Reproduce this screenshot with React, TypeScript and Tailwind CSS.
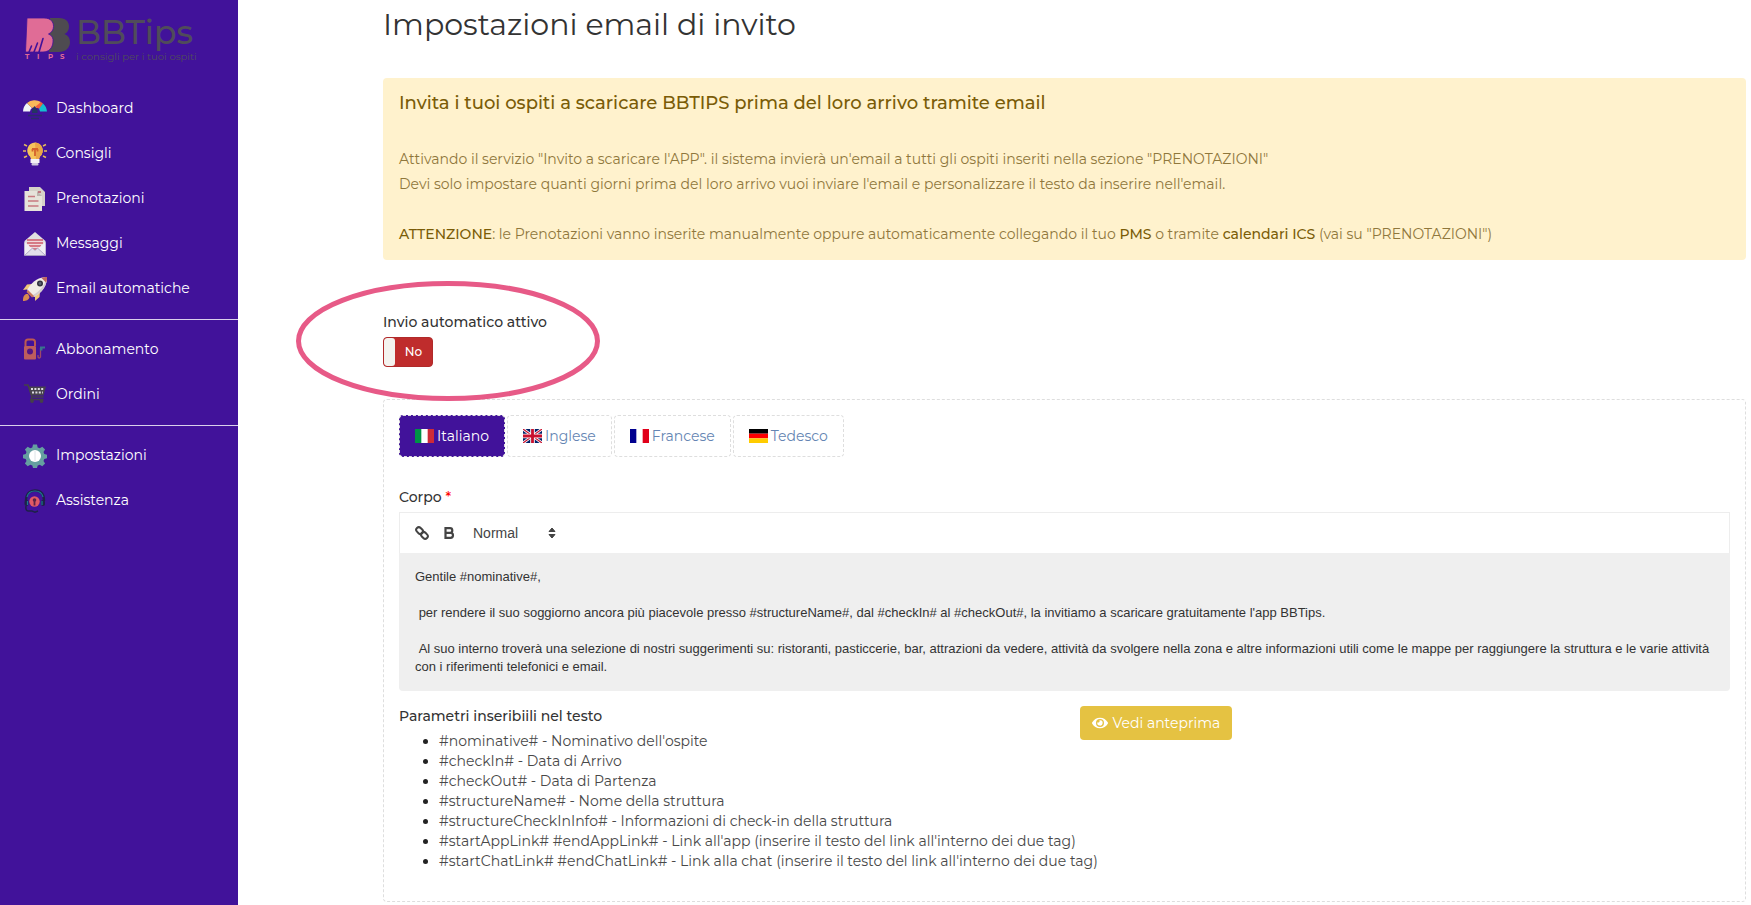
import { useState } from "react";
import type { ReactNode } from "react";
import { FaEye } from "react-icons/fa";

function Logo() {
  return (
    <a href="#" aria-label="BBTips" className="flex h-11 gap-1.5 pl-6">
      <svg viewBox="0 0 46 44" className="h-11 w-[46px] shrink-0" aria-hidden="true">
        <path
          d="M26 1 H35 C42 1 45 5 45 9.500 C45 13 43.500 15.500 40.500 17 C44 18.500 46 21 46 25 C46 31 41.500 35 35 35 H25z"
          fill="#4e4b50"
        />
        <path
          d="M3 1 H20 C27 1 29.500 5 29.500 9.500 C29.500 13 27.500 15.500 24.500 17 C28 18.500 29.500 21 29 25 C28.500 31 25 35 19 35 H1.500z"
          fill="#e06c96"
          stroke="#41129a"
          strokeWidth=".8"
        />
        <path
          d="M5 35 L7.500 29 M10 35 L13.500 26 M15 35 L19 21.500"
          fill="none"
          stroke="#41129a"
          strokeWidth="1.600"
          strokeLinecap="round"
        />
        <g fill="#e06c96" fontFamily="Montserrat, Inter, sans-serif" fontSize="7" fontWeight="700">
          <text x="1" y="42">T</text>
          <text x="13" y="42">I</text>
          <text x="24" y="42">P</text>
          <text x="36" y="42">S</text>
        </g>
      </svg>
      <span className="flex flex-col text-[#504c5a]">
        <span className="text-[33px] leading-[30px] font-medium">BBTips</span>
        <span className="pt-1 text-[10px] leading-3 whitespace-nowrap">i consigli per i tuoi ospiti</span>
      </span>
    </a>
  );
}

function Icon({ children }: { children: ReactNode }) {
  return (
    <svg viewBox="0 0 24 24" className="size-6 shrink-0" aria-hidden="true">
      {children}
    </svg>
  );
}

const icons: Record<string, ReactNode> = {
  dashboard: (
    <Icon>
      <path d="M0 14.500 A12 12 0 0 1 4 6 L9 11 A5 5 0 0 0 7 14.500z" fill="#f1f3f7" />
      <path d="M4 6 A12 12 0 0 1 18 5 L14 11 A5 5 0 0 0 9 11z" fill="#f9b95a" />
      <path d="M18 5 L20 6.500 L17 12 L12 10z" fill="#f0603d" />
      <path d="M20 6.500 A12 12 0 0 1 24 14.500 H17 A6 6 0 0 0 16 12z" fill="#14bfd0" />
      <path d="M11.500 9 L14.500 13 V16 H9 V13z" fill="#243561" />
      <path d="M5 18.500 H19 M8 21.500 H16" stroke="#2c2a6b" strokeWidth="1.500" />
    </Icon>
  ),
  consigli: (
    <Icon>
      <path d="M4 4 L1 2.500 M3 9 H0 M4 14 L1 15.500 M20 4 L23 2.500 M21 9 H24 M20 14 L23 15.500" stroke="#e6b95c" strokeWidth="1.500" />
      <path d="M12 .5 a8 8 0 0 1 5 14 L16 17 H8 L7 14.500 A8 8 0 0 1 12 .5z" fill="#f6c45c" />
      <path d="M12 .5 a8 8 0 0 1 5 14 L16 17 h-3z" fill="#eba646" />
      <path d="M9 7 H15 M12 7 V14 M9.500 7 v2.500 M14.500 7 v2.500" stroke="#d4622c" strokeWidth="1.800" fill="none" />
      <rect x="7.500" y="17" width="9" height="4" fill="#f3f1f5" />
      <rect x="8.500" y="21" width="7" height="2.500" rx="1" fill="#cdc7dc" />
    </Icon>
  ),
  prenotazioni: (
    <Icon>
      <path d="M6 0 H17 L22 5 V19 H6z" fill="#d5d2c8" />
      <path d="M1.500 4 H14 L19 9 V24 H1.500z" fill="#e6e3da" />
      <path d="M14 4 L19 9 H14z" fill="#bcb6ae" />
      <path d="M15 5 H18" stroke="#b8505f" strokeWidth="1.400" />
      <path d="M5 9.500 H12 M5 14 H15.500 M5 19 H15.500" stroke="#c87a80" strokeWidth="1.400" />
    </Icon>
  ),
  messaggi: (
    <Icon>
      <path d="M1.500 9 L12 0 L22.500 9 V23.500 H1.500z" fill="#e2dfe0" />
      <path d="M4 8 H20 V13 L12 20 L4 13z" fill="#f0dadd" />
      <path d="M4 8 H20 M4 11 H20 M6 14 H18 M9 17 H15" stroke="#cd5b69" strokeWidth="1.400" />
      <path d="M1.500 10 L9 16.500 L1.500 23.500z M22.500 10 L15 16.500 L22.500 23.500z" fill="#f1eff3" />
      <path d="M1.500 23.500 L9.500 16 L12 18.500 L14.500 16 L22.500 23.500z" fill="#e2dfea" stroke="#9c94b8" strokeWidth=".7" />
    </Icon>
  ),
  email: (
    <Icon>
      <path d="M10 7 L4 7.500 L0 13 L7 12z M17 14 L16.500 20 L12 24 L12 17z" fill="#efc877" />
      <path d="M6 10 C10 4 16 0 24 0 C24 8 20 14 14 18 L11 20 L4 13z" fill="#f1ede6" />
      <path d="M10 18 C17 14 22 8 24 0 C24 8 20 14 14 18 L11 20z" fill="#d4cccf" />
      <path d="M18.500 1 C20 0 22 0 24 0 C24 2 24 4 23 5.500z" fill="#bf6560" />
      <circle cx="17" cy="6.500" r="3" fill="#35343f" />
      <circle cx="17" cy="6.500" r="1.400" fill="#5b6574" />
      <path d="M3 17 C0 19 0 21 0 24 C3 24 6 23 6.500 20 L5 17z" fill="#d98a4f" />
      <path d="M5 13 L11 19 L9 20.500 L3.500 15z" fill="#c9785f" />
    </Icon>
  ),
  abbonamento: (
    <Icon>
      <path d="M2.500 8 V4 Q2.500 1.500 5 1.500 H9.500 Q12 1.500 12 4 V8" fill="none" stroke="#bd5a50" strokeWidth="2" />
      <rect x="1" y="8" width="12" height="13.500" rx="1" fill="#bd5d5d" />
      <circle cx="7" cy="13.500" r="3" fill="#521685" />
      <path d="M15 17 v2 q1.500 2 2.500 0 V10" fill="none" stroke="#9d4968" strokeWidth="1.300" />
      <path d="M17 8.500 h5 v2 h-2.500 v2 h-2.500z" fill="#39758c" />
    </Icon>
  ),
  ordini: (
    <Icon>
      <path d="M1 2 H5 L9 14 H20.500" fill="none" stroke="#454049" strokeWidth="1.600" />
      <path d="M5.500 3.500 H23 L20.500 12.500 H8z" fill="#48434d" />
      <path d="M8 6 H21 M9 9.500 H20" stroke="#dedbe3" strokeWidth="2" strokeDasharray="2 1.400" />
      <path d="M9 14 L8 16.500 H20.500" fill="none" stroke="#454049" strokeWidth="1.500" />
      <circle cx="9" cy="18" r="1.900" fill="#454049" />
      <circle cx="18.500" cy="18" r="1.900" fill="#454049" />
    </Icon>
  ),
  impostazioni: (
    <Icon>
      <path
        d="M10 .5h4l.7 3 2 .8 2.600-1.600 2.800 2.800-1.600 2.600.8 2 3 .7v3.400l-3 .7-.8 2 1.600 2.600-2.800 2.800-2.600-1.600-2 .8-.7 2.500h-4l-.7-2.500-2-.8-2.600 1.600-2.800-2.800 1.600-2.600-.8-2-3-.7v-3.400l3-.7.8-2L1.900 5.500l2.800-2.800 2.600 1.600 2-.8z"
        fill="#659fa0"
      />
      <circle cx="12" cy="12" r="6" fill="#ffffff" />
      <path d="M12 7 V17" stroke="#d5dde2" strokeWidth=".8" />
    </Icon>
  ),
  assistenza: (
    <Icon>
      <path d="M3 12 C3 4 7 1.500 12 1.500 C17 1.500 21 4 21 12" fill="none" stroke="#1e2149" strokeWidth="2.400" />
      <path d="M4 8 C5 4 8 2 12 2 C16 2 19 4 20 8" fill="none" stroke="#1b7791" strokeWidth="1.200" />
      <circle cx="11.500" cy="12.500" r="5.200" fill="#e05a66" />
      <circle cx="11.500" cy="11" r="1.800" fill="#5b2348" />
      <path d="M11.500 12 v4.500" stroke="#5b2348" strokeWidth="1.800" />
      <rect x="1.500" y="11" width="4" height="6" rx="2" fill="#1e2149" />
      <rect x="18" y="11" width="4" height="6" rx="2" fill="#1e2149" />
      <path d="M4.500 12 v4 M19 12 v4" stroke="#1b7791" strokeWidth="1.200" />
      <path d="M3 17 C2 23 6 22 9 22 L12 23.200 L15 22" fill="none" stroke="#1e2149" strokeWidth="1.500" />
    </Icon>
  ),
};

const groups = [
  [
    { id: "dashboard", label: "Dashboard" },
    { id: "consigli", label: "Consigli" },
    { id: "prenotazioni", label: "Prenotazioni" },
    { id: "messaggi", label: "Messaggi" },
    { id: "email", label: "Email automatiche" },
  ],
  [
    { id: "abbonamento", label: "Abbonamento" },
    { id: "ordini", label: "Ordini" },
  ],
  [
    { id: "impostazioni", label: "Impostazioni" },
    { id: "assistenza", label: "Assistenza" },
  ],
];

function Sidebar() {
  return (
    <aside className="w-[238px] shrink-0 bg-[#41129a] pt-[17px]">
      <Logo />
      <nav className="mt-[25px]">
        {groups.map((group, i) => (
          <ul key={i} className={i > 0 ? "mt-2 border-t border-[#d9d0eb] pt-[7px]" : ""}>
            {group.map((item) => (
              <li key={item.id}>
                <a href="#" className="flex h-[45px] items-center gap-[9px] pl-[23px] text-sm leading-[21px] text-white">
                  {icons[item.id]}
                  {item.label}
                </a>
              </li>
            ))}
          </ul>
        ))}
      </nav>
    </aside>
  );
}

const flags: Record<string, ReactNode> = {
  it: (
    <svg viewBox="0 0 19 14" className="h-3.5 w-[19px]" aria-hidden="true">
      <path d="M0 0H19V14H0z" fill="#fff" />
      <path d="M0 0H6.330V14H0z" fill="#009246" />
      <path d="M12.670 0H19V14H12.670z" fill="#ce2b37" />
    </svg>
  ),
  en: (
    <svg viewBox="0 0 19 14" className="h-3.5 w-[19px]" aria-hidden="true">
      <path d="M0 0H19V14H0z" fill="#012169" />
      <path d="M0 0L19 14M19 0L0 14" stroke="#fff" strokeWidth="2.800" />
      <path d="M0 0L19 14M19 0L0 14" stroke="#c8102e" strokeWidth="1.200" />
      <path d="M9.500 0V14M0 7H19" stroke="#fff" strokeWidth="4.600" />
      <path d="M9.500 0V14M0 7H19" stroke="#c8102e" strokeWidth="2.800" />
    </svg>
  ),
  fr: (
    <svg viewBox="0 0 19 14" className="h-3.5 w-[19px]" aria-hidden="true">
      <path d="M0 0H19V14H0z" fill="#fff" />
      <path d="M0 0H6.330V14H0z" fill="#00008f" />
      <path d="M12.670 0H19V14H12.670z" fill="#e1001a" />
    </svg>
  ),
  de: (
    <svg viewBox="0 0 19 14" className="h-3.5 w-[19px]" aria-hidden="true">
      <path d="M0 0H19V4.670H0z" fill="#000" />
      <path d="M0 4.670H19V9.330H0z" fill="#f00" />
      <path d="M0 9.330H19V14H0z" fill="#fc0" />
    </svg>
  ),
};

const languages = [
  { id: "it", label: "Italiano" },
  { id: "en", label: "Inglese" },
  { id: "fr", label: "Francese" },
  { id: "de", label: "Tedesco" },
];

const params = [
  "#nominative# - Nominativo dell'ospite",
  "#checkIn# - Data di Arrivo",
  "#checkOut# - Data di Partenza",
  "#structureName# - Nome della struttura",
  "#structureCheckInInfo# - Informazioni di check-in della struttura",
  "#startAppLink# #endAppLink# - Link all'app (inserire il testo del link all'interno dei due tag)",
  "#startChatLink# #endChatLink# - Link alla chat (inserire il testo del link all'interno dei due tag)",
];

const bodyText = `Gentile #nominative#,

 per rendere il suo soggiorno ancora più piacevole presso #structureName#, dal #checkIn# al #checkOut#, la invitiamo a scaricare gratuitamente l'app BBTips.

 Al suo interno troverà una selezione di nostri suggerimenti su: ristoranti, pasticcerie, bar, attrazioni da vedere, attività da svolgere nella zona e altre informazioni utili come le mappe per raggiungere la struttura e le varie attività con i riferimenti telefonici e email.`;

function AutoSend() {
  const [on, setOn] = useState(false);
  return (
    <section className="relative mt-[52px] w-fit">
      <svg
        viewBox="0 0 304 120"
        className="pointer-events-none absolute -top-[31px] -left-[87px] z-10 h-[120px] w-[304px]"
        aria-hidden="true"
      >
        <ellipse cx="152" cy="60" rx="149.500" ry="57.500" fill="none" stroke="#e75a87" strokeWidth="5" />
      </svg>
      <label htmlFor="auto-send" className="block text-sm leading-5 font-medium">
        Invio automatico attivo
      </label>
      <label className="mt-[5px] flex h-[30px] w-[50px] cursor-pointer overflow-hidden rounded border border-[#b02a2a] bg-[#bf2c2c]">
        <input
          id="auto-send"
          type="checkbox"
          role="switch"
          checked={on}
          onChange={(e) => setOn(e.target.checked)}
          className="w-[11px] shrink-0 cursor-pointer appearance-none rounded-[3px] bg-[#f4f3ef]"
        />
        <span className="flex flex-1 items-center justify-center text-xs font-medium text-white">{on ? "Sì" : "No"}</span>
      </label>
    </section>
  );
}

function Toolbar() {
  return (
    <div className="flex h-[41px] items-center border border-b-0 border-[#ededed] px-[15px] text-[#444]">
      <button type="button" aria-label="Link" className="flex w-7 items-center">
        <svg viewBox="0 0 14 14" className="size-3.5" fill="none" stroke="currentColor" strokeWidth="2" aria-hidden="true">
          <rect x="-3.700" y="-2.600" width="7.400" height="5.200" rx="2.600" transform="translate(4.600 4.600) rotate(45)" />
          <rect x="-3.700" y="-2.600" width="7.400" height="5.200" rx="2.600" transform="translate(9.400 9.400) rotate(45)" />
        </svg>
      </button>
      <button type="button" aria-label="Grassetto" className="flex w-[30px] items-center">
        <svg viewBox="0 0 12 12" className="size-3" fill="none" stroke="currentColor" strokeWidth="2.200" aria-hidden="true">
          <path d="M2.500 1.200H7a2.300 2.300 0 0 1 0 4.600H2.500zM2.500 5.800H7.500a2.500 2.500 0 0 1 0 5H2.500z" />
        </svg>
      </button>
      <label className="flex items-center">
        <select
          aria-label="Formato"
          defaultValue="Normal"
          className="w-[75px] appearance-none font-['Liberation_Sans',sans-serif] text-sm outline-none"
        >
          <option>Normal</option>
          <option>Heading</option>
        </select>
        <svg viewBox="0 0 8 12" className="h-3 w-2 shrink-0" fill="currentColor" aria-hidden="true">
          <path d="M4 1L7 4.500H1zM4 11L1 7.500H7z" stroke="currentColor" strokeLinejoin="round" />
        </svg>
      </label>
    </div>
  );
}

export default function App() {
  const [language, setLanguage] = useState("it");
  return (
    <div className="flex min-h-screen bg-white font-[Montserrat,Inter,sans-serif] text-[#333]">
      <Sidebar />
      <main className="min-w-0 flex-1 pr-[5px] pb-1 pl-[145px]">
        <h1 className="pt-[5px] text-[30px] leading-10">Impostazioni email di invito</h1>

        <section className="mt-[33px] rounded bg-[#fff2cd] px-4 pt-[13px] pb-[13px] text-sm leading-[25px] text-[#8f773c]">
          <h2 className="text-lg leading-6 font-medium text-[#7a5c07]">
            Invita i tuoi ospiti a scaricare BBTIPS prima del loro arrivo tramite email
          </h2>
          <p className="mt-8">
            Attivando il servizio "Invito a scaricare l'APP". il sistema invierà un'email a tutti gli ospiti inseriti nella sezione
            "PRENOTAZIONI"
            <br />
            Devi solo impostare quanti giorni prima del loro arrivo vuoi inviare l'email e personalizzare il testo da inserire nell'email.
          </p>
          <p className="mt-[25px]">
            <strong className="font-medium text-[#7a5c07]">ATTENZIONE</strong>: le Prenotazioni vanno inserite manualmente oppure
            automaticamente collegando il tuo <strong className="font-medium text-[#7a5c07]">PMS</strong> o tramite{" "}
            <strong className="font-medium text-[#7a5c07]">calendari ICS</strong> (vai su "PRENOTAZIONI")
          </p>
        </section>

        <AutoSend />

        <section className="mt-8 rounded border border-dashed border-[#dedede] px-[15px] pt-[15px] pb-[30px]">
          <div role="tablist" className="flex gap-0.5">
            {languages.map(({ id, label }) => (
              <button
                key={id}
                type="button"
                role="tab"
                aria-selected={language === id}
                onClick={() => setLanguage(id)}
                className={
                  language === id
                    ? "flex h-[42px] items-center gap-[3px] rounded border border-dashed border-[#dedede] bg-[#41129a] px-[15px] text-sm text-white"
                    : "flex h-[42px] items-center gap-[3px] rounded border border-dashed border-[#dedede] px-[15px] text-sm text-[#6485b3]"
                }
              >
                {flags[id]}
                {label}
              </button>
            ))}
          </div>

          <label htmlFor="body" className="mt-[30px] block text-sm leading-5 font-medium">
            Corpo <span className="text-[#ff0000]">*</span>
          </label>
          <div className="mt-[5px]">
            <Toolbar />
            <textarea
              id="body"
              rows={6}
              defaultValue={bodyText}
              className="block w-full resize-none overflow-hidden rounded-b bg-[#efefef] px-4 py-[15px] font-['Liberation_Sans',sans-serif] text-[13px] leading-[18px] text-[#333] outline-none"
            />
          </div>

          <div className="mt-[15px] grid grid-cols-2 gap-[30px]">
            <div>
              <h3 className="text-sm leading-5 font-medium">Parametri inseribiili nel testo</h3>
              <ul className="mt-[5px] list-disc pl-10 text-sm leading-5 whitespace-nowrap text-[#484848] marker:text-[#222]">
                {params.map((param) => (
                  <li key={param}>{param}</li>
                ))}
              </ul>
            </div>
            <div>
              <button type="button" className="flex h-[34px] items-center gap-[5px] rounded bg-[#e5c242] px-3 text-sm text-white">
                <FaEye className="size-4" aria-hidden="true" />
                Vedi anteprima
              </button>
            </div>
          </div>
        </section>
      </main>
    </div>
  );
}
